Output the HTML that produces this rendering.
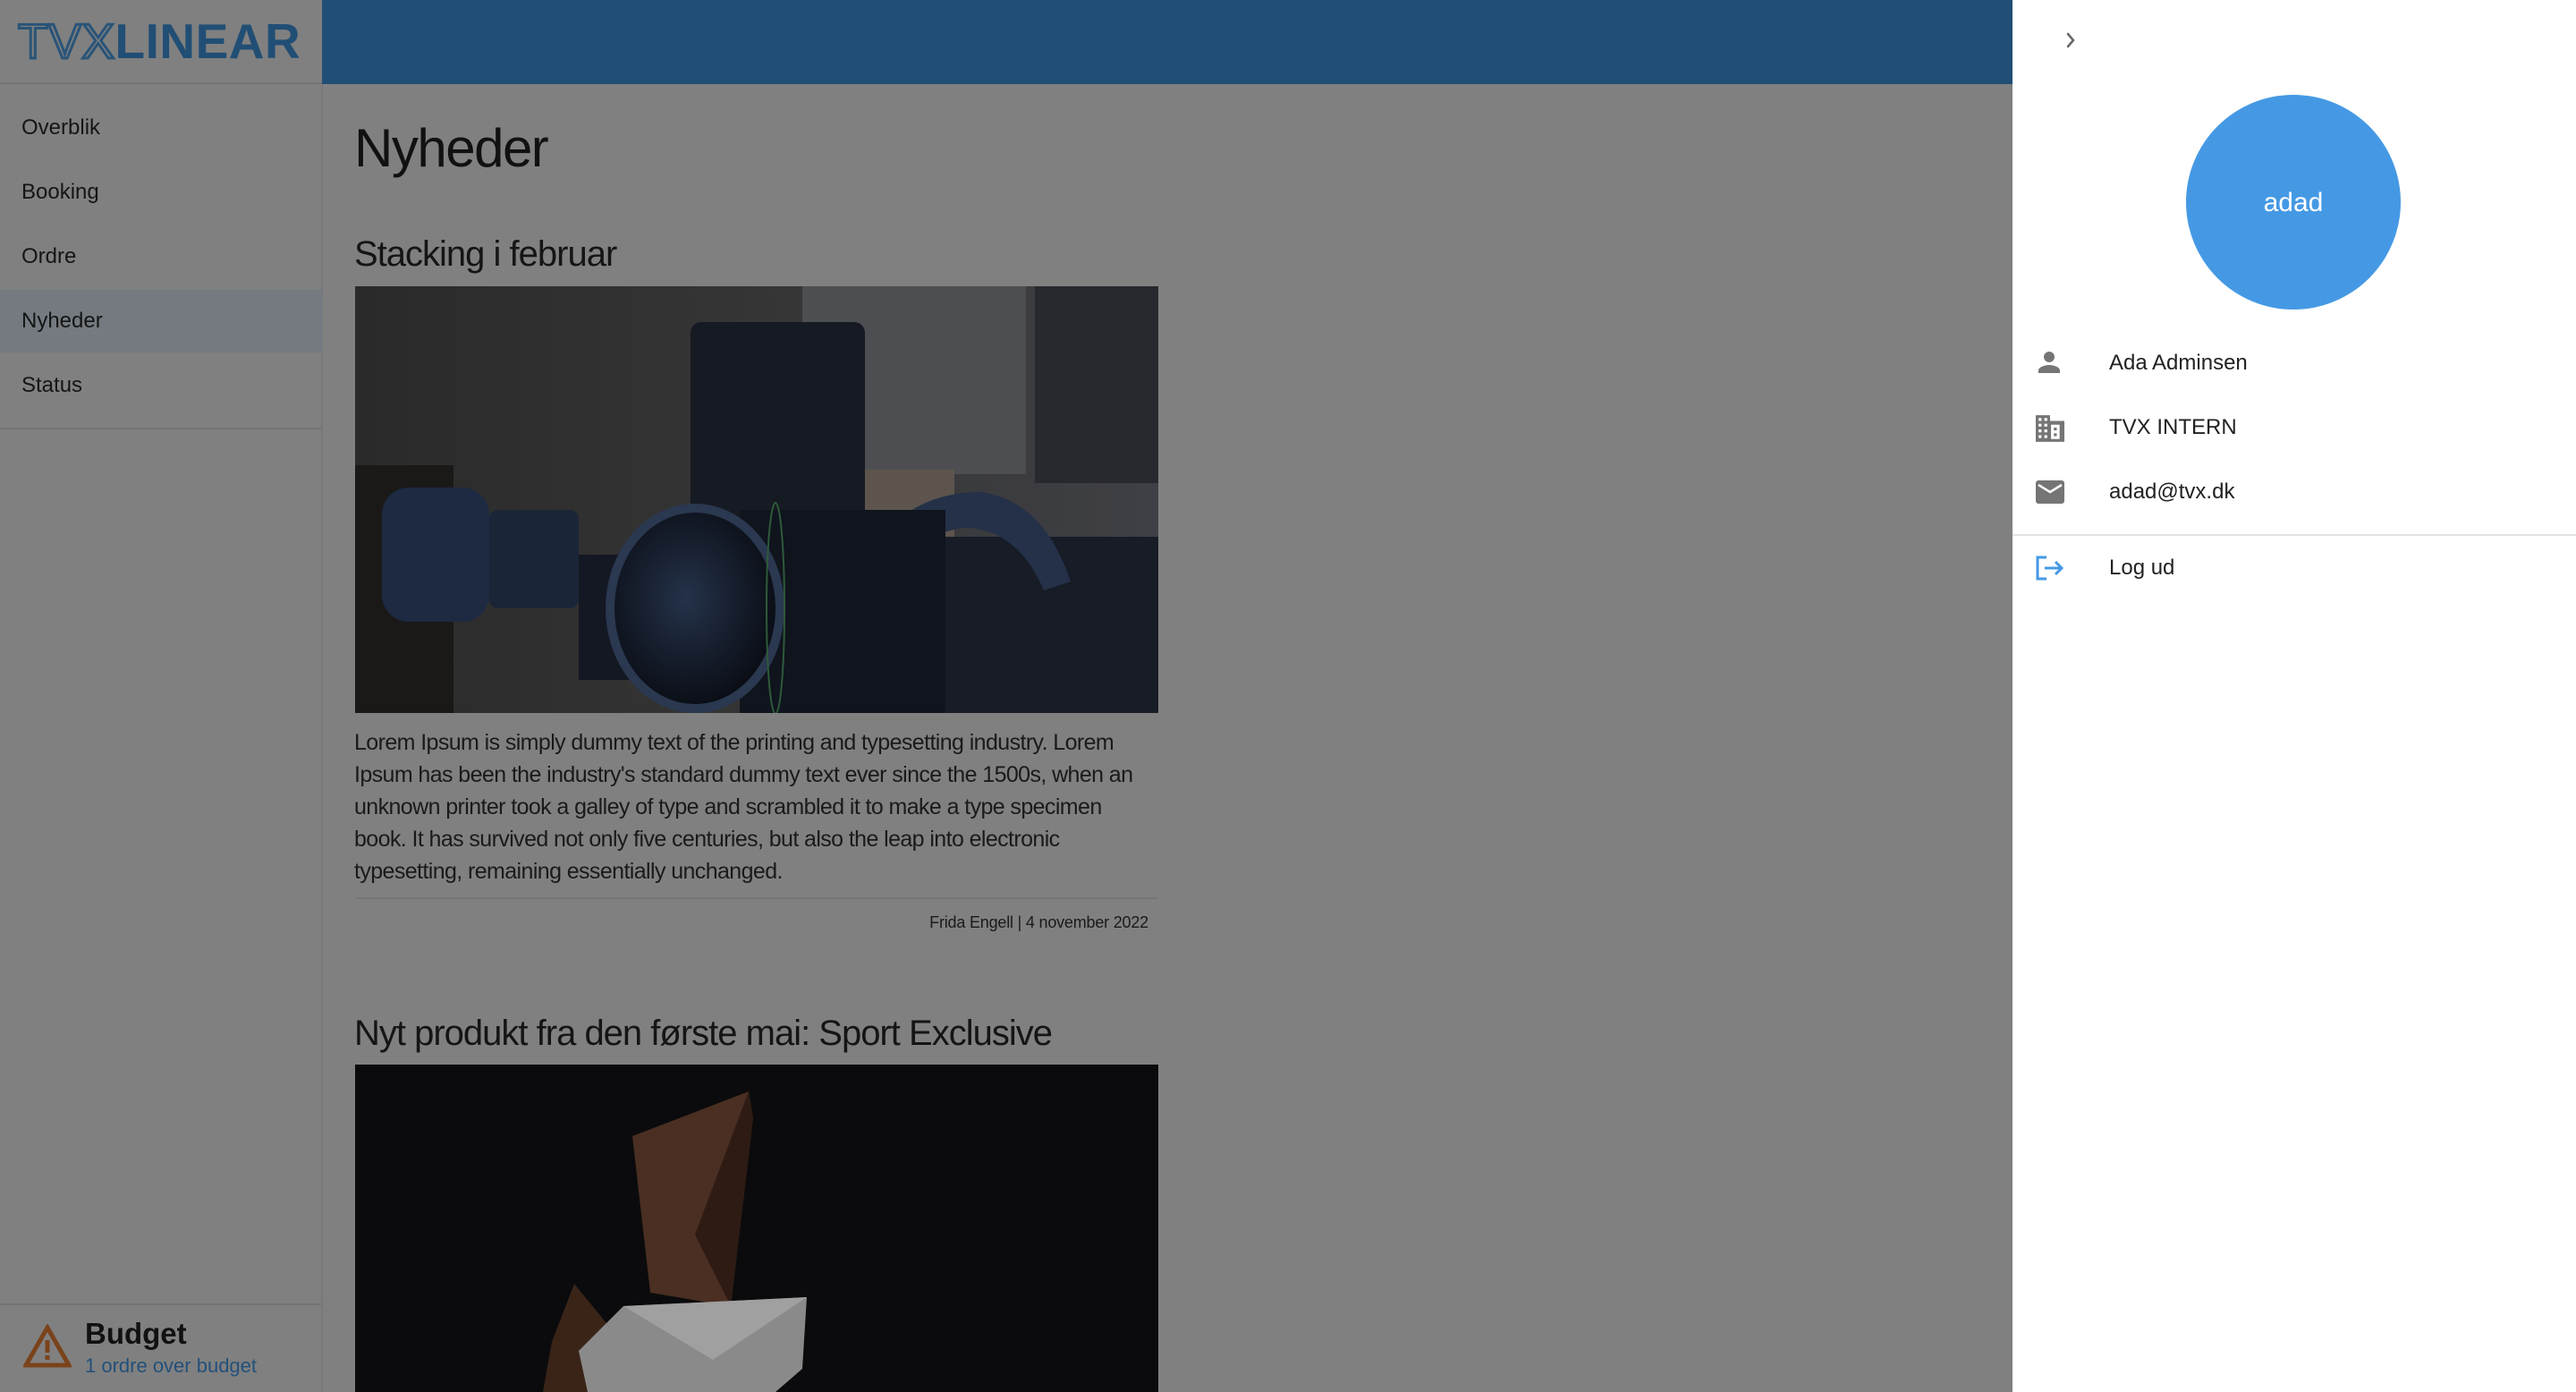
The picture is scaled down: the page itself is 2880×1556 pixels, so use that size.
<!DOCTYPE html>
<html><head><meta charset="utf-8"><style>
*{margin:0;padding:0;box-sizing:border-box}
body{width:2880px;height:1556px;overflow:hidden;background:#808080;font-family:"Liberation Sans",sans-serif;position:relative}
.abs{position:absolute}
.nav{position:absolute;left:0;width:360px;height:72px;font-size:24px;color:#151515;padding-left:24px;line-height:74px}
.txt{white-space:nowrap}
</style></head><body>
<div class="abs" style="left:0;top:0;width:360px;height:94px;background:#808080;border-bottom:2px solid #747474"></div>
<div class="abs" style="left:360px;top:0;width:1890px;height:94px;background:#214e75"></div>
<div class="abs txt" style="left:20px;top:15px;font-size:55px;font-weight:900;letter-spacing:0.5px;line-height:62px">
<span style="color:transparent;-webkit-text-stroke:3px #2a5478;font-weight:400">TVX</span><span style="color:#214e75">LINEAR</span></div>
<div class="abs" style="left:359px;top:94px;width:2px;height:1462px;background:#787878"></div>
<div class="nav" style="top:106px">Overblik</div>
<div class="nav" style="top:178px">Booking</div>
<div class="nav" style="top:250px">Ordre</div>
<div class="nav" style="top:324px;background:#747a7f;height:70px;line-height:70px">Nyheder</div>
<div class="nav" style="top:394px">Status</div>
<div class="abs" style="left:0;top:478px;width:359px;height:2px;background:#747474"></div>
<div class="abs" style="left:0;top:1457px;width:359px;height:2px;background:#747474"></div>
<svg class="abs" style="left:26px;top:1480px" width="54" height="50" viewBox="0 0 54 50"><path d="M27 4 L51 46 L3 46 Z" fill="none" stroke="#7a431c" stroke-width="5" stroke-linejoin="miter"/><rect x="24.5" y="18" width="5" height="14" fill="#7a431c"/><rect x="24.5" y="35" width="5" height="5" fill="#7a431c"/></svg>
<div class="abs txt" style="left:95px;top:1472px;font-size:33px;font-weight:bold;color:#111">Budget</div>
<div class="abs txt" style="left:95px;top:1514px;font-size:22px;color:#23507a">1 ordre over budget</div>
<div class="abs txt" style="left:396px;top:131px;font-size:60px;color:#111;letter-spacing:-1.5px">Nyheder</div>
<div class="abs txt" style="left:396px;top:262px;font-size:40px;color:#151515;letter-spacing:-1px">Stacking i februar</div>
<svg class="abs" style="left:397px;top:320px" width="898" height="477" viewBox="0 0 898 477">
<defs><linearGradient id="bg1" x1="0" y1="0" x2="1" y2="0"><stop offset="0" stop-color="#2a2a2a"/><stop offset="0.5" stop-color="#353535"/><stop offset="1" stop-color="#3f4045"/></linearGradient>
<radialGradient id="ln" cx="0.45" cy="0.45" r="0.6"><stop offset="0" stop-color="#24324a"/><stop offset="1" stop-color="#080a10"/></radialGradient></defs>
<rect width="898" height="477" fill="url(#bg1)"/>
<rect x="500" y="0" width="250" height="210" fill="#4d4e52"/>
<rect x="570" y="205" width="100" height="190" fill="#5c544d"/>
<rect x="0" y="200" width="110" height="277" fill="#1a1918"/>
<rect x="375" y="40" width="195" height="230" fill="#161a22" rx="12"/>
<rect x="250" y="300" width="230" height="140" fill="#141822"/>
<rect x="30" y="225" width="120" height="150" fill="#1d2a42" rx="30"/>
<rect x="150" y="250" width="100" height="110" fill="#1b2538" rx="10"/>
<rect x="600" y="280" width="298" height="197" fill="#181c26"/>
<path d="M570 310 Q610 230 700 230 Q770 240 800 330 L770 340 Q740 270 680 270 Q620 280 600 320 Z" fill="#243148"/>
<rect x="760" y="0" width="138" height="220" fill="#28292e"/>
<rect x="430" y="250" width="230" height="227" fill="#10141d"/>
<ellipse cx="380" cy="360" rx="95" ry="112" fill="url(#ln)" stroke="#2a3850" stroke-width="10"/>
<ellipse cx="470" cy="360" rx="10" ry="118" fill="none" stroke="#2e5a3a" stroke-width="2"/>
</svg>
<div class="abs txt" style="left:396px;top:812px;font-size:25px;line-height:36px;color:#1a1a1a;letter-spacing:-0.6px">Lorem Ipsum is simply dummy text of the printing and typesetting industry. Lorem<br>Ipsum has been the industry's standard dummy text ever since the 1500s, when an<br>unknown printer took a galley of type and scrambled it to make a type specimen<br>book. It has survived not only five centuries, but also the leap into electronic<br>typesetting, remaining essentially unchanged.</div>
<div class="abs" style="left:397px;top:1003px;width:898px;height:2px;background:#767676"></div>
<div class="abs txt" style="right:1596px;top:1021px;font-size:18px;color:#1a1a1a;letter-spacing:-0.2px">Frida Engell | 4 november 2022</div>
<div class="abs txt" style="left:396px;top:1133px;font-size:40px;color:#151515;letter-spacing:-1px">Nyt produkt fra den første mai: Sport Exclusive</div>
<svg class="abs" style="left:397px;top:1190px" width="898" height="366" viewBox="0 0 898 366">
<rect width="898" height="366" fill="#0b0b0d"/>
<path d="M310 80 L440 30 L445 60 L420 270 L330 255 Z" fill="#4a2f22"/>
<path d="M440 30 L445 60 L420 270 L380 190 Z" fill="#2e1c14"/>
<path d="M210 366 L220 310 L245 245 L290 300 L300 366 Z" fill="#3a2418"/>
<path d="M250 320 L300 270 L505 260 L500 340 L470 366 L260 366 Z" fill="#8a8a8a"/>
<path d="M300 270 L505 260 L400 330 Z" fill="#a0a0a0"/>
</svg>
<div class="abs" style="left:2250px;top:0;width:630px;height:1556px;background:#fff"></div>
<svg class="abs" style="left:2305px;top:35px" width="20" height="20" viewBox="0 0 20 20"><path d="M7 3 L13 10 L7 17" fill="none" stroke="#666" stroke-width="2.5" stroke-linecap="round"/></svg>
<div class="abs" style="left:2444px;top:106px;width:240px;height:240px;border-radius:50%;background:#4599e4;color:#fff;font-size:30px;text-align:center;line-height:242px">adad</div>
<svg class="abs" style="left:2273px;top:387px" width="36" height="36" viewBox="0 0 24 24"><path fill="#757575" d="M12 12c2.2 0 4-1.8 4-4s-1.8-4-4-4-4 1.8-4 4 1.8 4 4 4zm0 2c-2.7 0-8 1.3-8 4v2h16v-2c0-2.7-5.3-4-8-4z"/></svg>
<div class="abs txt" style="left:2358px;top:392px;font-size:24px;color:#222">Ada Adminsen</div>
<svg class="abs" style="left:2276px;top:464px" width="32" height="30" viewBox="0 0 30 28"><path fill="#757575" d="M0 0h15v6h15v22H0z"/><g fill="#fff"><rect x="3" y="3" width="3" height="3"/><rect x="9" y="3" width="3" height="3"/><rect x="3" y="9" width="3" height="3"/><rect x="9" y="9" width="3" height="3"/><rect x="3" y="15" width="3" height="3"/><rect x="9" y="15" width="3" height="3"/><rect x="3" y="21" width="3" height="3"/><rect x="9" y="21" width="3" height="3"/><rect x="16" y="10" width="9" height="15"/></g><g fill="#757575"><rect x="19" y="13" width="3" height="3"/><rect x="19" y="19" width="3" height="3"/></g></svg>
<div class="abs txt" style="left:2358px;top:464px;font-size:24px;color:#222">TVX INTERN</div>
<svg class="abs" style="left:2276px;top:537px" width="32" height="26" viewBox="0 0 32 26"><rect width="32" height="26" rx="3" fill="#757575"/><path d="M3 5 L16 13 L29 5" fill="none" stroke="#fff" stroke-width="2.5"/></svg>
<div class="abs txt" style="left:2358px;top:536px;font-size:24px;color:#222">adad@tvx.dk</div>
<div class="abs" style="left:2250px;top:597px;width:630px;height:2px;background:#e2e2e2"></div>
<svg class="abs" style="left:2276px;top:621px" width="32" height="28" viewBox="0 0 32 28"><path d="M12 2 H2 V26 H12" fill="none" stroke="#4599e4" stroke-width="3"/><path d="M10 14 H29 M22 7 L29 14 L22 21" fill="none" stroke="#4599e4" stroke-width="3"/></svg>
<div class="abs txt" style="left:2358px;top:621px;font-size:24px;color:#222">Log ud</div>
</body></html>
